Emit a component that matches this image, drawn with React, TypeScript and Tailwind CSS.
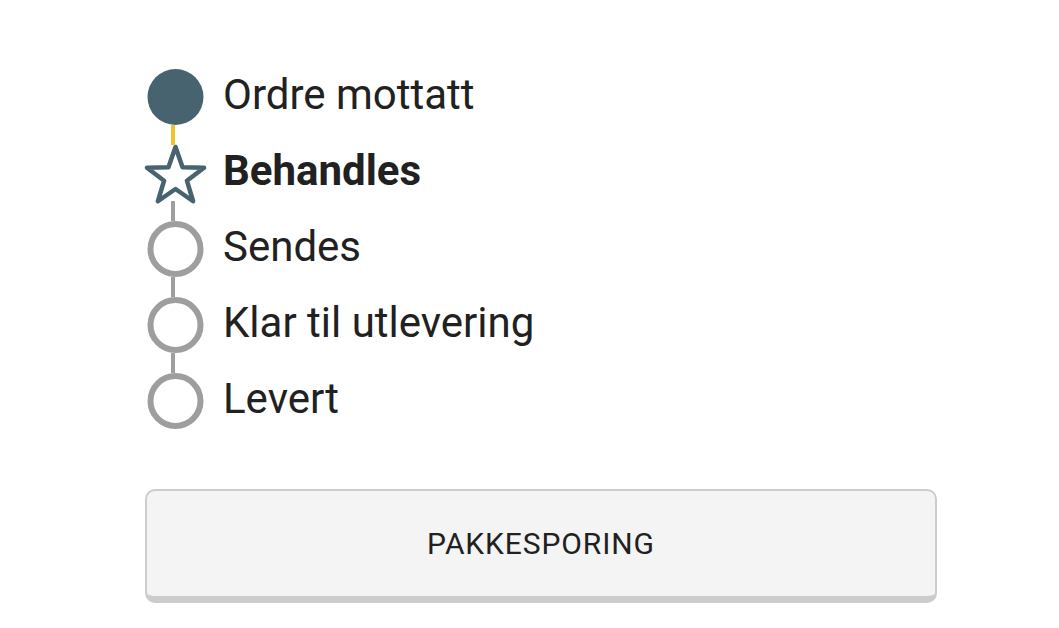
import React from "react";

const font = { fontFamily: "Roboto, 'Noto Sans', sans-serif" };

function Filled() {
  return (
    <svg width="60" height="56" viewBox="0 0 60 56">
      <circle cx="30.5" cy="28" r="28" fill="#47636f" />
    </svg>
  );
}

function Empty() {
  return (
    <svg width="60" height="56" viewBox="0 0 60 56">
      <circle cx="30.5" cy="28" r="25" fill="none" stroke="#9e9e9e" strokeWidth="6" />
    </svg>
  );
}

function Star() {
  return (
    <svg width="60" height="56" viewBox="0 -1 60 56" overflow="visible">
      <polygon
        points="30.5,1 37.55,21.29 59.03,21.73 41.91,34.71 48.13,55.27 30.5,43 12.87,55.27 19.09,34.71 1.97,21.73 23.45,21.29"
        fill="none"
        stroke="#47636f"
        strokeWidth="4.5"
        strokeLinejoin="round"
      />
    </svg>
  );
}

function Line({ color }: { color: string }) {
  return (
    <div className="flex h-[20px]">
      <div className={`ml-[26px] w-[4px] h-full ${color}`} />
    </div>
  );
}

function Step({ icon, label, bold }: { icon: React.ReactNode; label: string; bold?: boolean }) {
  return (
    <div className="flex h-[56px] items-center gap-[18px]">
      <div className="w-[60px] h-[56px] flex-none">{icon}</div>
      <span
        className={`text-[42px] leading-none text-[#212121] -mt-[4px] ${bold ? "font-bold" : "font-normal"}`}
      >
        {label}
      </span>
    </div>
  );
}

export default function App() {
  return (
    <div className="w-[1059px] h-[628px] bg-white pl-[145px] pt-[69px]" style={font}>
      <div className="flex flex-col">
        <Step icon={<Filled />} label="Ordre mottatt" />
        <Line color="bg-[#f2c12e]" />
        <Step icon={<Star />} label="Behandles" bold />
        <Line color="bg-[#9e9e9e]" />
        <Step icon={<Empty />} label="Sendes" />
        <Line color="bg-[#9e9e9e]" />
        <Step icon={<Empty />} label="Klar til utlevering" />
        <Line color="bg-[#9e9e9e]" />
        <Step icon={<Empty />} label="Levert" />
      </div>
      <button className="mt-[60px] w-[792px] h-[114px] rounded-[10px] border-2 border-b-[7px] border-[#cccccc] bg-[#f4f4f4] flex items-center justify-center text-[30px] text-[#212121] tracking-[0.9px]">
        PAKKESPORING
      </button>
    </div>
  );
}
